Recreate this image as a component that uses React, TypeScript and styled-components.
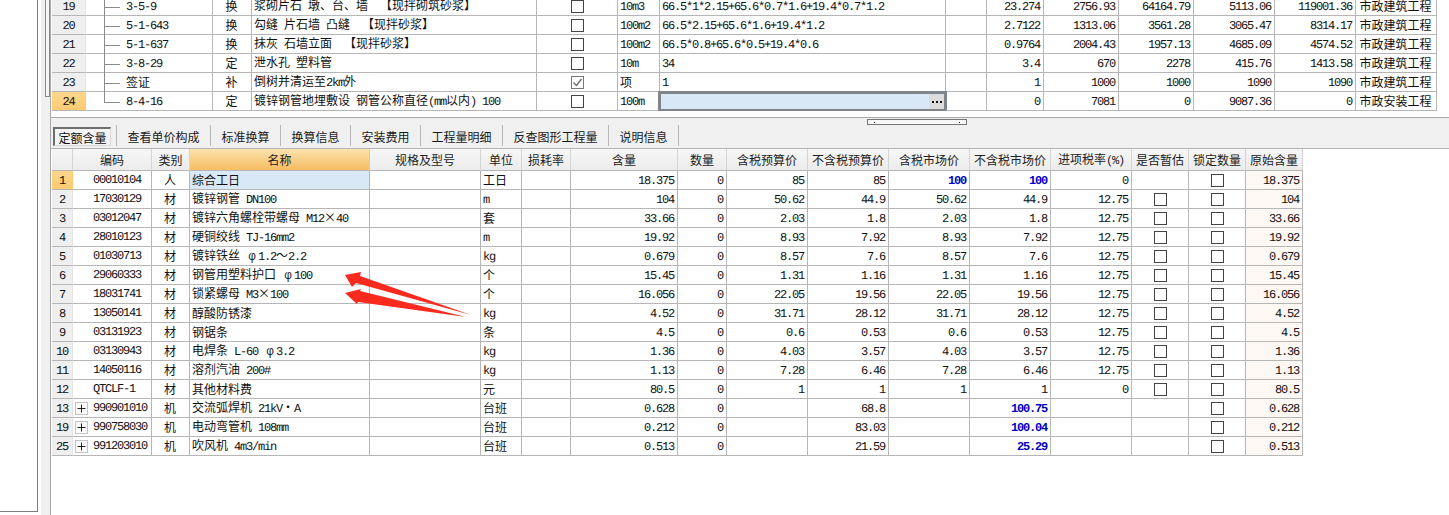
import React from "react";
import styled, { createGlobalStyle } from "styled-components";

const Global = createGlobalStyle`
  html, body { margin: 0; padding: 0; background: #fff; }
  body { font-family: "Noto Sans CJK SC", "Liberation Sans", sans-serif; font-size: 12px; color: #111; }
`;

const Page = styled.div`
  position: relative;
  display: flex;
  width: 1449px;
  height: 515px;
  overflow: hidden;
  background: #fff;
`;
const LeftPane = styled.div`
  box-sizing: border-box;
  width: 38px;
  height: 512px;
  border-right: 1px solid #7c7c7c;
  border-bottom: 1px solid #7c7c7c;
  flex: none;
`;
const Strip = styled.div`
  box-sizing: border-box;
  width: 10px;
  margin-left: 3px;
  padding-left: 4px;
  background: #f0f0f0;
  border-right: 1px solid #a8a8a8;
  flex: none;
`;
const Thumb = styled.div`
  box-sizing: border-box;
  width: 5px;
  height: 97px;
  background: #f6f6f6;
  border: 1px solid #8a8a8a;
  border-top: 0;
`;
const Main = styled.div`
  flex: 1;
  min-width: 0;
  display: flex;
  flex-direction: column;
`;
const TopPanel = styled.div`
  box-sizing: border-box;
  height: 118px;
  padding-left: 1px;
  border-bottom: 1px solid #a8a8a8;
  flex: none;
`;
const TopClip = styled.div`
  height: 111px;
  overflow: hidden;
  display: flex;
  flex-direction: column;
  justify-content: flex-end;
`;
const TabStrip = styled.div`
  position: relative;
  box-sizing: border-box;
  height: 31px;
  padding: 9px 0 0 2px;
  display: flex;
  align-items: flex-start;
  background: #f0f0f0;
  border-bottom: 1px solid #b4b4b4;
  flex: none;
`;
const Handle = styled.div`
  position: absolute;
  left: 816px;
  top: 1px;
  box-sizing: border-box;
  width: 100px;
  height: 6px;
  background: #f8f8f8;
  border: 1px solid #777;
  &::before, &::after {
    content: "";
    position: absolute;
    top: 2px;
    width: 1px;
    height: 1px;
    background: #111;
  }
  &::before { left: 6px; }
  &::after { right: 6px; }
`;
const ActiveTab = styled.div`
  box-sizing: border-box;
  width: 58px;
  height: 19px;
  margin-right: 5px;
  text-align: center;
  font-size: 12px;
  background: #f4f4f4;
  border-top: 2px solid #6e6e6e;
  border-left: 2px solid #6e6e6e;
  border-right: 1px solid #d8d8d8;
  border-bottom: 1px solid #d8d8d8;
  line-height: 17px;
`;
const Tab = styled.div`
  box-sizing: content-box;
  height: 21px;
  margin-top: -2px;
  padding: 0 10.5px;
  line-height: 23px;
  font-size: 12px;
  color: #1a1a1a;
  border-left: 1px solid #b8b8b8;
  &:last-child { border-right: 1px solid #b8b8b8; }
`;
const BottomPanel = styled.div`
  padding-left: 1px;
  flex: 1;
`;

const Grid = styled.table<{ $w: number }>`
  width: ${(p) => p.$w}px;
  table-layout: fixed;
  border-collapse: separate;
  border-spacing: 0;
  flex: none;
`;
const Col = styled.col<{ $w: number }>`
  width: ${(p) => p.$w}px;
`;
const Cell = styled.td<{ $align?: string; $bg?: string }>`
  box-sizing: border-box;
  position: relative;
  height: 19px;
  padding: 0 3px 0 2px;
  border-right: 1px solid #b6b6b6;
  border-bottom: 1px solid #b6b6b6;
  white-space: pre;
  overflow: visible;
  line-height: 12px;
  font-size: 12px;
  color: #111;
  text-align: ${(p) => p.$align || "left"};
  background: ${(p) => p.$bg || "transparent"};
`;
const RowNo = styled(Cell)<{ $active?: boolean }>`
  padding: 0;
  text-align: center;
  background: ${(p) => (p.$active ? "linear-gradient(#fed68c,#fccb72)" : "#efefef")};
  border-right: 1px solid ${(p) => (p.$active ? "#fccb72" : "#e4e4e4")};
`;
const TreeCell = styled(Cell)<{ $last?: boolean }>`
  padding-left: 40px;
  &::before {
    content: "";
    position: absolute;
    left: 18px;
    top: 0;
    width: 1px;
    height: ${(p) => (p.$last ? "10px" : "19px")};
    background: #8c8c8c;
  }
  &::after {
    content: "";
    position: absolute;
    left: 18px;
    top: 10px;
    width: 16px;
    height: 1px;
    background: #8c8c8c;
  }
`;
const HeadCell = styled.th<{ $sel?: boolean }>`
  box-sizing: border-box;
  height: 22px;
  padding: 0;
  font-weight: 400;
  font-size: 12px;
  line-height: 12px;
  color: #222;
  white-space: pre;
  text-align: center;
  background: ${(p) => (p.$sel ? "linear-gradient(#fde3ae,#f6bd62)" : "linear-gradient(#f6f6f6,#ececec)")};
  border-right: 1px solid ${(p) => (p.$sel ? "#f3c67a" : "#d4d4d4")};
  border-bottom: 1px solid #b6b6b6;
`;
const Lat = styled.span<{ $bold?: boolean }>`
  font-family: "Liberation Mono", monospace;
  font-size: 12px;
  letter-spacing: -1.2px;
  font-weight: ${(p) => (p.$bold ? 700 : 400)};
  text-rendering: geometricPrecision;
`;
const BlueVal = styled(Lat)`
  color: #0000c4;
`;
const Phi = styled.span`
  display: inline-block;
  width: 12px;
  text-align: center;
  font-family: "Liberation Mono", monospace;
`;
const Box = styled.span<{ $on?: boolean }>`
  box-sizing: border-box;
  display: block;
  width: 13px;
  height: 13px;
  margin: 0 auto;
  background: #fff;
  border: 1px solid ${(p) => (p.$on ? "#777" : "#444")};
  svg { display: block; }
`;
const BoxCell = styled(Cell)`
  padding: 0;
`;
const CodeWrap = styled.div`
  display: flex;
  align-items: center;
`;
const Slot = styled.span`
  width: 13px;
  height: 13px;
  margin: 0 5px 0 0;
  flex: none;
`;
const Expand = styled(Slot)`
  box-sizing: border-box;
  border: 1px solid #c4c4c4;
  background: #fbfbfb;
  svg { display: block; }
`;
const Editor = styled.div`
  position: absolute;
  left: -2px;
  right: -2px;
  top: -1px;
  bottom: -2px;
  display: flex;
  background: #d9e8f6;
  border: 3px solid #80858a;
`;
const EditorField = styled.div`
  flex: 1;
`;
const EditorButton = styled.div`
  width: 15px;
  display: flex;
  align-items: center;
  justify-content: center;
  gap: 2px;
  background: #dcdcdc;
  i {
    display: block;
    width: 2px;
    height: 2px;
    background: #111;
  }
`;
const Arrows = styled.svg`
  position: absolute;
  left: 0;
  top: 0;
  pointer-events: none;
`;

const Mixed = ({ t }: { t: string }) => {
  const parts = t.split(/([\x20-\x7e]+|\u03c6)/).filter(Boolean);
  return (
    <>
      {parts.map((p, i) =>
        p === "\u03c6" ? (
          <Phi key={i}>{p}</Phi>
        ) : /^[\x20-\x7e]+$/.test(p) ? (
          <Lat key={i}>{p}</Lat>
        ) : (
          <span key={i}>{p}</span>
        )
      )}
    </>
  );
};

const Check = ({ on }: { on?: boolean }) => (
  <Box $on={on}>
    {on && (
      <svg width="11" height="11" viewBox="0 0 11 11">
        <path d="M1.5 5.5 L4.5 8.5 L9.5 2" fill="none" stroke="#6a6a6a" strokeWidth="1.4" />
      </svg>
    )}
  </Box>
);

const topCols = [34, 127, 39, 285, 81, 42, 286, 41, 57, 75, 75, 81, 81, 81];
const topRows = [
  ["19", "3-5-9", "换", "浆砌片石 墩、台、墙  【现拌砌筑砂浆】", "", "10m3", "66.5*1*2.15+65.6*0.7*1.6+19.4*0.7*1.2", "23.274", "2756.93", "64164.79", "5113.06", "119001.36", "市政建筑工程"],
  ["20", "5-1-643", "换", "勾缝 片石墙 凸缝  【现拌砂浆】", "", "100m2", "66.5*2.15+65.6*1.6+19.4*1.2", "2.7122", "1313.06", "3561.28", "3065.47", "8314.17", "市政建筑工程"],
  ["21", "5-1-637", "换", "抹灰 石墙立面  【现拌砂浆】", "", "100m2", "66.5*0.8+65.6*0.5+19.4*0.6", "0.9764", "2004.43", "1957.13", "4685.09", "4574.52", "市政建筑工程"],
  ["22", "3-8-29", "定", "泄水孔 塑料管", "", "10m", "34", "3.4", "670", "2278", "415.76", "1413.58", "市政建筑工程"],
  ["23", "签证", "补", "倒树并清运至2km外", "on", "项", "1", "1", "1000", "1000", "1090", "1090", "市政建筑工程"],
  ["24", "8-4-16", "定", "镀锌钢管地埋敷设 钢管公称直径(mm以内) 100", "", "100m", "", "0", "7081", "0", "9087.36", "0", "市政安装工程"],
];

const botCols = [21, 79, 38, 180, 111, 41, 49, 107, 49, 81, 81, 81, 81, 81, 57, 57, 57];
const botHead = ["", "编码", "类别", "名称", "规格及型号", "单位", "损耗率", "含量", "数量", "含税预算价", "不含税预算价", "含税市场价", "不含税市场价", "进项税率(%)", "是否暂估", "锁定数量", "原始含量"];

type Bot = { no: string; code: string; type: string; name: string; unit: string; qty: string; a: string; b: string; c: string; d: string; tax: string; est: boolean; plus?: boolean };
const mat = (no: string, code: string, name: string, unit: string, qty: string, a: string, b: string): Bot => ({
  no, code, type: "材", name, unit, qty, a, b, c: a, d: b, tax: "12.75", est: true,
});
const mach = (no: string, code: string, name: string, qty: string, b: string, d: string): Bot => ({
  no, code, type: "机", name, unit: "台班", qty, a: "", b, c: "", d, tax: "", est: false, plus: true,
});
const botRows: Bot[] = [
  { no: "1", code: "00010104", type: "人", name: "综合工日", unit: "工日", qty: "18.375", a: "85", b: "85", c: "100", d: "100", tax: "0", est: false },
  mat("2", "17030129", "镀锌钢管 DN100", "m", "104", "50.62", "44.9"),
  mat("3", "03012047", "镀锌六角螺栓带螺母 M12×40", "套", "33.66", "2.03", "1.8"),
  mat("4", "28010123", "硬铜绞线 TJ-16mm2", "m", "19.92", "8.93", "7.92"),
  mat("5", "01030713", "镀锌铁丝 φ1.2～2.2", "kg", "0.679", "8.57", "7.6"),
  mat("6", "29060333", "钢管用塑料护口 φ100", "个", "15.45", "1.31", "1.16"),
  mat("7", "18031741", "锁紧螺母 M3×100", "个", "16.056", "22.05", "19.56"),
  mat("8", "13050141", "醇酸防锈漆", "kg", "4.52", "31.71", "28.12"),
  mat("9", "03131923", "钢锯条", "条", "4.5", "0.6", "0.53"),
  mat("10", "03130943", "电焊条 L-60 φ3.2", "kg", "1.36", "4.03", "3.57"),
  mat("11", "14050116", "溶剂汽油 200#", "kg", "1.13", "7.28", "6.46"),
  { no: "12", code: "QTCLF-1", type: "材", name: "其他材料费", unit: "元", qty: "80.5", a: "1", b: "1", c: "1", d: "1", tax: "0", est: true },
  mach("13", "990901010", "交流弧焊机 21kV·A", "0.628", "68.8", "100.75"),
  mach("19", "990758030", "电动弯管机 108mm", "0.212", "83.03", "100.04"),
  mach("25", "991203010", "吹风机 4m3/min", "0.513", "21.59", "25.29"),
];

const sum = (a: number[]) => a.reduce((x, y) => x + y, 0);

const tabs = ["查看单价构成", "标准换算", "换算信息", "安装费用", "工程量明细", "反查图形工程量", "说明信息"];

export default function App() {
  return (
    <Page>
      <Global />
      <LeftPane />
      <Strip>
        <Thumb />
      </Strip>
      <Main>
        <TopPanel>
          <TopClip>
            <Grid $w={sum(topCols)}>
              <colgroup>
                {topCols.map((w, i) => (
                  <Col key={i} $w={w} />
                ))}
              </colgroup>
              <tbody>
                {topRows.map((r, i) => {
                  const last = i === topRows.length - 1;
                  return (
                    <tr key={r[0]}>
                      <RowNo $active={last}><Lat>{r[0]}</Lat></RowNo>
                      <TreeCell $last={last}><Mixed t={r[1]} /></TreeCell>
                      <Cell $align="center">{r[2]}</Cell>
                      <Cell><Mixed t={r[3]} /></Cell>
                      <BoxCell><Check on={r[4] === "on"} /></BoxCell>
                      <Cell><Mixed t={r[5]} /></Cell>
                      <Cell>
                        <Mixed t={r[6]} />
                        {last && (
                          <Editor>
                            <EditorField />
                            <EditorButton><i /><i /><i /></EditorButton>
                          </Editor>
                        )}
                      </Cell>
                      <Cell />
                      {r.slice(7, 12).map((v, j) => (
                        <Cell key={j} $align="right"><Lat>{v}</Lat></Cell>
                      ))}
                      <Cell $align="center">{r[12]}</Cell>
                    </tr>
                  );
                })}
              </tbody>
            </Grid>
          </TopClip>
        </TopPanel>
        <TabStrip>
          <Handle />
          <ActiveTab>定额含量</ActiveTab>
          {tabs.map((t) => (
            <Tab key={t}>{t}</Tab>
          ))}
        </TabStrip>
        <BottomPanel>
          <Grid $w={sum(botCols)}>
            <colgroup>
              {botCols.map((w, i) => (
                <Col key={i} $w={w} />
              ))}
            </colgroup>
            <thead>
              <tr>
                {botHead.map((h, i) => (
                  <HeadCell key={i} $sel={h === "名称"}><Mixed t={h} /></HeadCell>
                ))}
              </tr>
            </thead>
            <tbody>
              {botRows.map((r, i) => {
                const blue = i === 0 || r.plus;
                return (
                  <tr key={r.no}>
                    <RowNo $active={i === 0}><Lat>{r.no}</Lat></RowNo>
                    <Cell>
                      <CodeWrap>
                        {r.plus ? (
                          <Expand>
                            <svg width="11" height="11" viewBox="0 0 11 11">
                              <path d="M1.5 5.5H9.5M5.5 1.5V9.5" stroke="#222" strokeWidth="1" />
                            </svg>
                          </Expand>
                        ) : (
                          <Slot />
                        )}
                        <Lat>{r.code}</Lat>
                      </CodeWrap>
                    </Cell>
                    <Cell $align="center">{r.type}</Cell>
                    <Cell $bg={i === 0 ? "#d9e8f6" : undefined}><Mixed t={r.name} /></Cell>
                    <Cell />
                    <Cell><Mixed t={r.unit} /></Cell>
                    <Cell />
                    <Cell $align="right"><Lat>{r.qty}</Lat></Cell>
                    <Cell $align="right"><Lat>0</Lat></Cell>
                    <Cell $align="right"><Lat>{r.a}</Lat></Cell>
                    <Cell $align="right"><Lat>{r.b}</Lat></Cell>
                    <Cell $align="right">
                      {i === 0 ? <BlueVal $bold>{r.c}</BlueVal> : <Lat>{r.c}</Lat>}
                    </Cell>
                    <Cell $align="right">
                      {blue ? <BlueVal $bold>{r.d}</BlueVal> : <Lat>{r.d}</Lat>}
                    </Cell>
                    <Cell $align="right"><Lat>{r.tax}</Lat></Cell>
                    <BoxCell>{r.est && <Check />}</BoxCell>
                    <BoxCell><Check /></BoxCell>
                    <Cell $align="right" $bg="#fdf8f3"><Lat>{r.qty}</Lat></Cell>
                  </tr>
                );
              })}
            </tbody>
          </Grid>
        </BottomPanel>
      </Main>
      <Arrows width="1449" height="515" viewBox="0 0 1449 515">
        <path d="M345 275 L361 272 L360 276 L471 315 L356 283 L352 287 Z" fill="#fb2a1e" />
        <path d="M345 293 L361 289 L360 291 L466 317 L358 302 L357 304 Z" fill="#fb2a1e" />
      </Arrows>
    </Page>
  );
}
